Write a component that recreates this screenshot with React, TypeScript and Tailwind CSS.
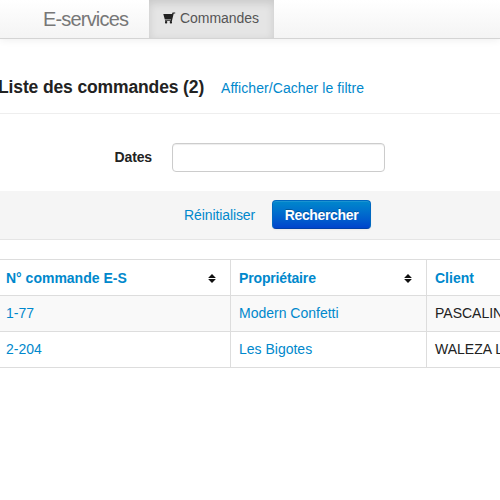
function SortIcon() {
  return (
    <svg width="8" height="9" viewBox="0 0 8 9" className="mt-[1px] shrink-0" fill="#111">
      <path d="M4 0 L7.9 4 H0.1 Z" />
      <path d="M0.1 5 H7.9 L4 9 Z" />
    </svg>
  );
}

function CartIcon() {
  return (
    <svg width="13" height="12" viewBox="0 0 13 12" className="shrink-0" fill="#222">
      <path d="M0.3 1.9 H9 L9.6 0.4 H12.2 V1.5 H10.7 L8.9 9.1 H2 V8.2 H7.8 L8 7.4 H1.8 Z" />
      <rect x="2" y="9" width="2.2" height="2.4" rx="0.7" />
      <rect x="6.8" y="9" width="2.2" height="2.4" rx="0.7" />
    </svg>
  );
}

const rows = [
  { id: "1-77", owner: "Modern Confetti", client: "PASCALINE", bg: "bg-[#f9f9f9]" },
  { id: "2-204", owner: "Les Bigotes", client: "WALEZA L", bg: "bg-white" },
];

export default function App() {
  return (
    <div className="h-[500px] w-[500px] overflow-hidden bg-white font-['Liberation_Sans',Arial,sans-serif] text-[14px] leading-5 text-[#222]">
      <nav className="flex h-[39px] border-b border-[#d4d4d4] bg-linear-to-b from-white to-[#f4f4f4] shadow-[0_1px_8px_rgba(0,0,0,0.07)]">
        <a className="w-[149px] pl-[43px] pt-[9px] text-[20px] tracking-[-0.82px] text-[#777]">E-services</a>
        <a className="flex w-[125px] items-center gap-[4px] bg-[#e5e5e5] pl-[14px] pb-[2px] text-[#555] shadow-[inset_0_3px_8px_rgba(0,0,0,0.125)]">
          <CartIcon />
          <span className="tracking-[-0.05px]">Commandes</span>
        </a>
      </nav>

      <header className="flex h-[75px] items-baseline border-b border-[#eee] pt-[38px]">
        <h1 className="-ml-[2px] w-[223px] whitespace-nowrap text-[17.5px] font-bold tracking-[-0.13px]">Liste des commandes (2)</h1>
        <a className="whitespace-nowrap tracking-[0.07px] text-[#0088cc]">Afficher/Cacher le filtre</a>
      </header>

      <form>
        <div className="flex h-[77px] items-start pt-[29px]">
          <label className="w-[152px] pt-[4px] text-right font-bold tracking-[-0.15px]">Dates</label>
          <input className="ml-[20px] h-[29px] w-[213px] rounded-[4px] border border-[#ccc] bg-white shadow-[inset_0_1px_1px_rgba(0,0,0,0.075)]" />
        </div>
        <div className="flex h-[49px] items-start border-b border-[#e5e5e5] bg-[#f5f5f5] pl-[184px] pt-[9px]">
          <a className="w-[88px] pt-[5px] tracking-[-0.1px] text-[#0088cc]">Réinitialiser</a>
          <button
            type="button"
            className="h-[29px] w-[99px] rounded-[4px] border border-[#0068c0] border-b-[#0040a8] bg-linear-to-b from-[#0088cc] to-[#0044cc] font-bold tracking-[-0.35px] text-white shadow-[inset_0_1px_0_rgba(255,255,255,0.1),0_1px_2px_rgba(0,0,0,0.05)] text-shadow-[0_-1px_0_rgba(0,0,0,0.25)]"
          >
            Rechercher
          </button>
        </div>
      </form>

      <div className="mt-[19px] border-t border-[#ddd]">
        <div className="grid h-[36px] grid-cols-[230px_196px_74px] border-b border-[#ddd] font-bold text-[#0088cc]">
          <div className="flex items-center justify-between pl-[6px] pr-[14px]">
            <span>N° commande E-S</span>
            <SortIcon />
          </div>
          <div className="flex items-center justify-between border-l border-[#ddd] pl-[8px] pr-[14px]">
            <span className="tracking-[-0.15px]">Propriétaire</span>
            <SortIcon />
          </div>
          <div className="flex items-center border-l border-[#ddd] pl-[8px]">Client</div>
        </div>
        {rows.map((row) => (
          <div key={row.id} className={`grid h-[36px] grid-cols-[230px_196px_74px] border-b border-[#ddd] ${row.bg}`}>
            <a className="flex items-center pb-px pl-[6px] text-[#0088cc]">{row.id}</a>
            <a className="flex items-center border-l border-[#ddd] pb-px pl-[8px] text-[#0088cc]">{row.owner}</a>
            <div className="flex items-center overflow-hidden whitespace-nowrap border-l border-[#ddd] pb-px pl-[8px]">{row.client}</div>
          </div>
        ))}
      </div>
    </div>
  );
}
